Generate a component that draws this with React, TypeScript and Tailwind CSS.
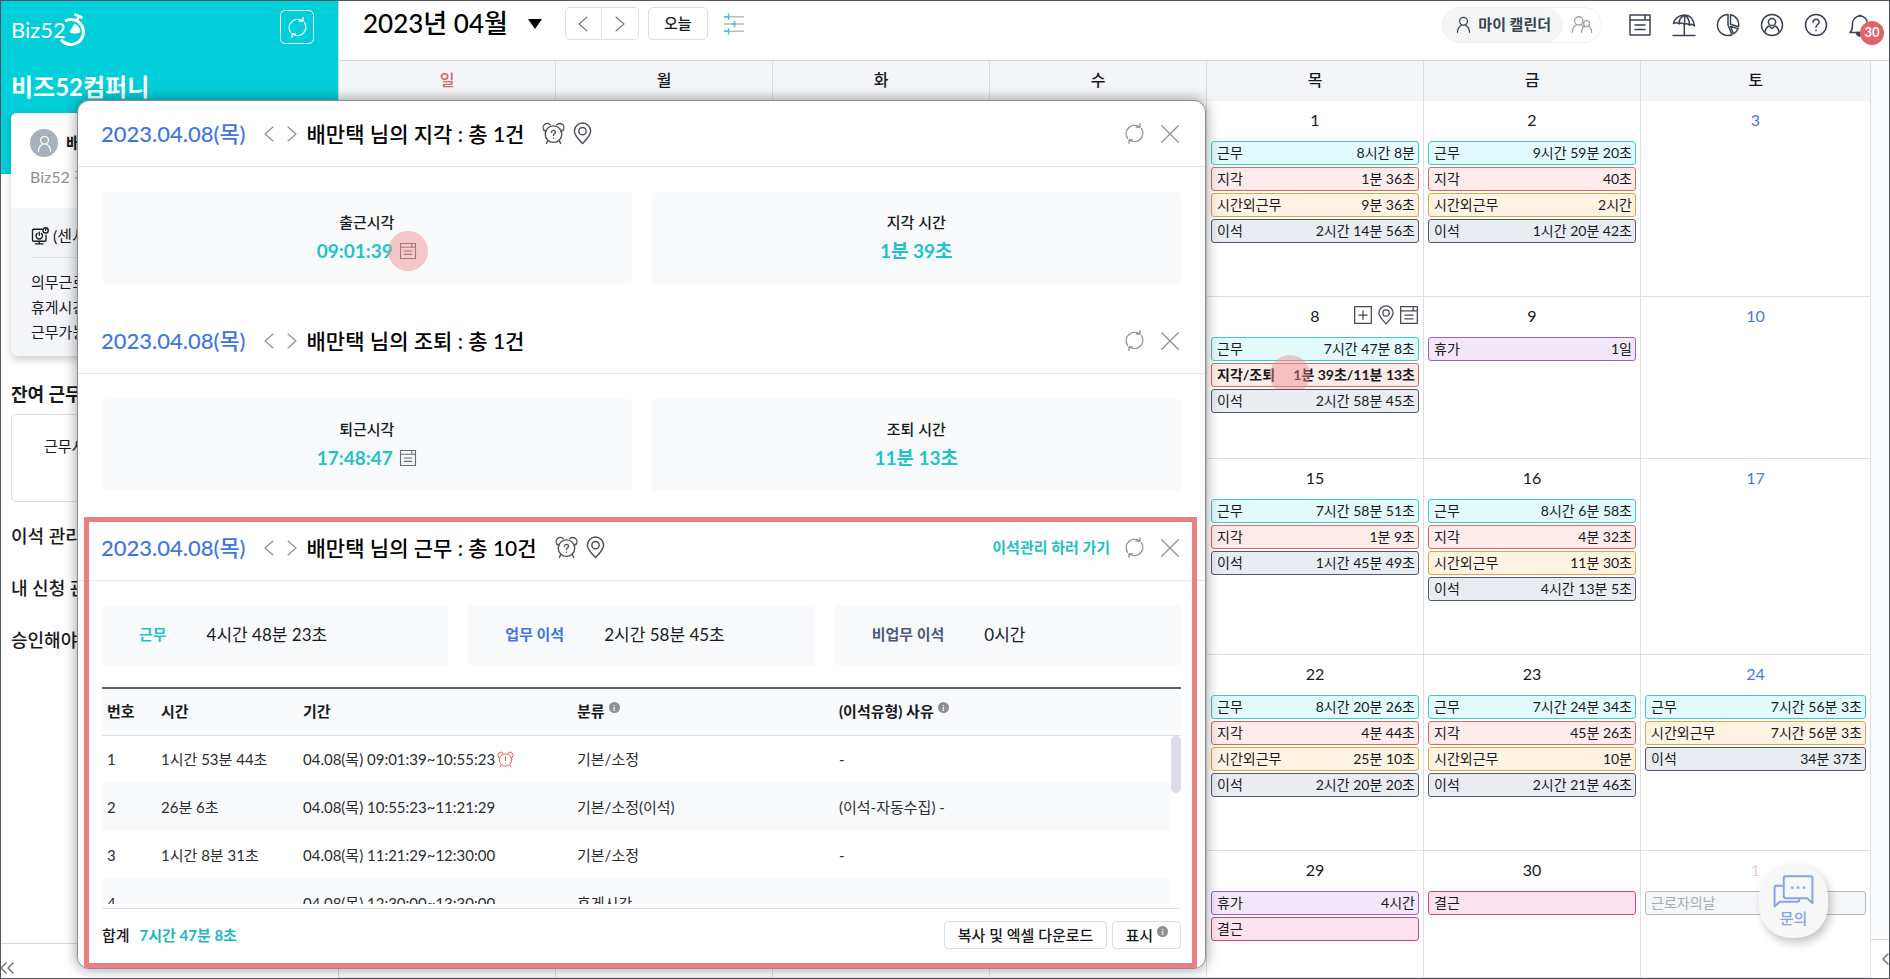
import type { ReactNode } from "react";
import { ChevronsLeft } from "lucide-react";

type IconProps = { className?: string };

function Svg({ className, box = 24, children, width = 1.3 }: IconProps & { box?: number; children: ReactNode; width?: number }) {
  return (
    <svg
      className={className}
      viewBox={`0 0 ${box} ${box}`}
      fill="none"
      stroke="currentColor"
      strokeWidth={width}
      strokeLinecap="round"
      strokeLinejoin="round"
      aria-hidden="true"
    >
      {children}
    </svg>
  );
}

const NoteIcon = ({ className }: IconProps) => (
  <Svg className={className} width={1.5}>
    <path d="M2 2h20v20H2zM2 7h20M17 2v5M7 12h10M7 16.5h10" />
  </Svg>
);

const RefreshIcon = ({ className }: IconProps) => (
  <Svg className={className} width={1.5}>
    <path d="M4 17.500A9.700 9.700 0 0 1 17.500 4.200" />
    <path d="M18.300.800v4h-4.300" />
    <path d="M20 6.500A9.700 9.700 0 0 1 6.500 19.800" />
    <path d="M5.700 23.200v-4h4.300" />
  </Svg>
);

const CloseIcon = ({ className }: IconProps) => (
  <Svg className={className}>
    <path d="M3 3l18 18M21 3L3 21" />
  </Svg>
);

const PrevIcon = ({ className }: IconProps) => (
  <Svg className={className} box={16} width={1.1}>
    <path d="M12 1L4 8l8 7" />
  </Svg>
);

const NextIcon = ({ className }: IconProps) => (
  <Svg className={className} box={16} width={1.1}>
    <path d="M4 1l8 7-8 7" />
  </Svg>
);

const PinIcon = ({ className }: IconProps) => (
  <Svg className={className} width={1.5}>
    <path d="M12 22.500C8 18 3.500 14 3.500 9.600a8.500 8.500 0 0 1 17 0c0 4.400-4.500 8.400-8.500 12.900z" />
    <circle cx="12" cy="9.600" r="3.800" />
  </Svg>
);

function AlarmIcon({ className, mark }: IconProps & { mark: "?" | "!" }) {
  return (
    <Svg className={className} width={1.4}>
      <circle cx="12" cy="12.700" r="8.600" />
      <path d="M2.300 8.800A4.200 4.200 0 0 1 8.700 3M21.700 8.800A4.200 4.200 0 0 0 15.300 3M6 19.400l-1.500 3.100M18 19.400l1.500 3.100" />
      <path d="M2.300 8.800l1.800 1M21.700 8.800l-1.800 1" />
      {mark === "?" ? (
        <path d="M9.800 10.800c.2-2.900 4.600-2.500 4.300.1-.2 1.500-2.100 1.500-2.100 3.200M12 16.800v.2" />
      ) : (
        <path d="M12 8v6M12 16.800v.2" />
      )}
    </Svg>
  );
}

const UserIcon = ({ className }: IconProps) => (
  <Svg className={className} width={1.8}>
    <circle cx="12" cy="7.500" r="5.500" />
    <path d="M3.500 23c0-5 2-8 5.500-10M20.500 23c0-5-2-8-5.500-10" />
  </Svg>
);

const UsersIcon = ({ className }: IconProps) => (
  <Svg className={className} width={1.4}>
    <circle cx="8.500" cy="7.500" r="4.500" />
    <path d="M1.500 20c0-4.500 1.500-6.800 4.500-8.300M11 11.700c1.200.6 2.200 1.500 2.900 2.700" />
    <circle cx="17" cy="10.500" r="3.200" />
    <path d="M11.500 20c0-3.500 1.200-5.500 3.600-6.500M22.500 20c0-3.500-1.200-5.500-3.600-6.500" />
  </Svg>
);

const ParasolIcon = ({ className }: IconProps) => (
  <Svg className={className} width={1.5}>
    <path d="M1.500 10.500C2.500 5.500 7 2 12.500 2c5.500 0 9 4 10 11-1.500-1.800-3.300-2-5-.8-1.500-1.600-3.500-1.800-5-.8-1.800-1.500-4-1.700-5.500-.6-1.700-1.200-4-1.300-5.500-.3zM12.500 2C8.500 4 7 7.500 7 10.700M12.500 2c.3 2.500.3 6 0 9.300M12.500 2c3.500 2 5 5.500 5 10M12.300 11.500V22M1 22.500h22" />
  </Svg>
);

const PieIcon = ({ className }: IconProps) => (
  <Svg className={className} width={1.5}>
    <path d="M12 1.500A10.500 10.500 0 1 0 16 21.700L12 12z" />
    <path d="M14.500 1.700v9.500l8 2.500a10 10 0 0 0-8-12zM14.500 13.500l3 7.300c2.300-1.300 3.800-3 4.600-5.200z" />
  </Svg>
);

const AccountIcon = ({ className }: IconProps) => (
  <Svg className={className} width={1.5}>
    <circle cx="12" cy="12" r="10.500" />
    <circle cx="12" cy="9" r="3.600" />
    <path d="M5 19.500c.3-3.300 1.600-5.300 3.800-6.500l3.200 2.500 3.200-2.500c2.200 1.200 3.500 3.200 3.800 6.500" />
  </Svg>
);

const HelpIcon = ({ className }: IconProps) => (
  <Svg className={className} width={1.5}>
    <circle cx="12" cy="12" r="10.500" />
    <path d="M9 9.300c.2-4.200 6.400-3.800 6.100 0-.2 2.300-3.100 2.300-3.100 5M12 17.300v.4" />
  </Svg>
);

const BellIcon = ({ className }: IconProps) => (
  <Svg className={className} width={1.5}>
    <path d="M2 19.500c2.500-2.500 2.500-4.500 2.500-9a7.500 7.500 0 0 1 15 0c0 4.500 0 6.500 2.500 9z" />
    <path d="M8.500 19.500a3.500 3.500 0 0 0 7 0z" fill="currentColor" />
    <path d="M11 2.500h2" />
  </Svg>
);

const PlusBoxIcon = ({ className }: IconProps) => (
  <Svg className={className} width={1.5}>
    <path d="M2 2h20v20H2zM12 7v10M7 12h10" />
  </Svg>
);

const FilterIcon = ({ className }: IconProps) => (
  <svg className={className} viewBox="0 0 24 24" fill="none" strokeWidth="1.600" aria-hidden="true">
    <path d="M1 4h22M1 12h22M1 20h22" stroke="#b9bcc2" />
    <path d="M1 4h6M10 12h4M1 20h6M6 .5v7M12.500 8.500v7M6 16.500v7" stroke="#35c9d0" />
  </svg>
);

const PowerMonitorIcon = ({ className }: IconProps) => (
  <Svg className={className} width={1.8}>
    <path d="M15 3H3.500A1.500 1.500 0 0 0 2 4.500v13A1.500 1.500 0 0 0 3.500 19h15a1.500 1.500 0 0 0 1.500-1.500V11M11 19v3.500M6 22.500h10M11 7v4M8.200 8.500a4.300 4.300 0 1 0 5.600 0" />
    <circle cx="19.500" cy="4.500" r="3.500" />
    <path d="M19.500 3v1.500" />
  </Svg>
);

const ChatIcon = ({ className }: IconProps) => (
  <svg className={className} viewBox="0 0 42 34" fill="none" stroke="currentColor" strokeWidth="2" strokeLinejoin="round" aria-hidden="true">
    <path d="M10.500 11H3.500A2 2 0 0 0 1.500 13v19.500l5.500-5h18a2 2 0 0 0 2-2V24" />
    <path d="M13 1.200h25.500a2 2 0 0 1 2 2v25.800l-5.500-5H13a2 2 0 0 1-2-2V3.200a2 2 0 0 1 2-2z" />
    <path d="M18.500 13H21M24.500 13H27M30.500 13H33" strokeWidth="2.500" />
  </svg>
);

const Logo = () => (
  <a href="#" className="flex items-center text-white" aria-label="Biz52">
    <span className="text-[22px] leading-9">Biz52</span>
    <svg className="-ml-2 h-10 w-7 overflow-visible" viewBox="0 0 28 40" fill="none" stroke="#fff" aria-hidden="true">
      <path d="M7 11A12.500 12.500 0 1 1 3 29.500" strokeWidth="3" />
      <path d="M16.500 4.200l8 3.600M21 6l-2 4" strokeWidth="2.600" />
      <path d="M11.500 22l5-8.500c3.500 1.500 5.500 4.500 6 8.500-3.500 2-8 2-11 0z" fill="#fff" stroke="none" />
    </svg>
  </a>
);

const InfoDot = () => (
  <span className="ml-1 inline-flex size-[11px] -translate-y-1.5 items-center justify-center rounded-full bg-[#8d8f93] text-[8px] leading-none font-bold text-white">
    i
  </span>
);

type EventKind = "work" | "late" | "over" | "away" | "leave" | "absent" | "holiday";
type CalendarEvent = { kind: EventKind; label: string; value?: string; strong?: boolean };
type Day = { date: string; tone?: "sat" | "off"; tools?: boolean; events?: CalendarEvent[] };

const eventStyle: Record<EventKind, string> = {
  work: "border-[#3fcbcb] bg-[#e2fafb]",
  late: "border-[#d66a62] bg-[#fdecea]",
  over: "border-[#e3a54a] bg-[#fff4e3]",
  away: "border-[#505a6c] bg-[#e9edf2]",
  leave: "border-[#9a62c4] bg-[#f3e8fa]",
  absent: "border-[#d2457c] bg-[#fde3ee]",
  holiday: "border-[#b4bac2] bg-[#f4f6f8] text-[#a7acb3]",
};

const work = (value: string): CalendarEvent => ({ kind: "work", label: "근무", value });
const late = (value: string): CalendarEvent => ({ kind: "late", label: "지각", value });
const over = (value: string): CalendarEvent => ({ kind: "over", label: "시간외근무", value });
const away = (value: string): CalendarEvent => ({ kind: "away", label: "이석", value });

const empty: Day[] = [{ date: "" }, { date: "" }, { date: "" }, { date: "" }];

const weeks: { height: string; days: Day[] }[] = [
  {
    height: "min-h-[196px]",
    days: [
      ...empty,
      { date: "1", events: [work("8시간 8분"), late("1분 36초"), over("9분 36초"), away("2시간 14분 56초")] },
      { date: "2", events: [work("9시간 59분 20초"), late("40초"), over("2시간"), away("1시간 20분 42초")] },
      { date: "3", tone: "sat" },
    ],
  },
  {
    height: "min-h-[162px]",
    days: [
      ...empty,
      {
        date: "8",
        tools: true,
        events: [
          work("7시간 47분 8초"),
          { kind: "late", label: "지각/조퇴", value: "1분 39초/11분 13초", strong: true },
          away("2시간 58분 45초"),
        ],
      },
      { date: "9", events: [{ kind: "leave", label: "휴가", value: "1일" }] },
      { date: "10", tone: "sat" },
    ],
  },
  {
    height: "min-h-[196px]",
    days: [
      ...empty,
      { date: "15", events: [work("7시간 58분 51초"), late("1분 9초"), away("1시간 45분 49초")] },
      { date: "16", events: [work("8시간 6분 58초"), late("4분 32초"), over("11분 30초"), away("4시간 13분 5초")] },
      { date: "17", tone: "sat" },
    ],
  },
  {
    height: "min-h-[196px]",
    days: [
      ...empty,
      { date: "22", events: [work("8시간 20분 26초"), late("4분 44초"), over("25분 10초"), away("2시간 20분 20초")] },
      { date: "23", events: [work("7시간 24분 34초"), late("45분 26초"), over("10분"), away("2시간 21분 46초")] },
      { date: "24", tone: "sat", events: [work("7시간 56분 3초"), over("7시간 56분 3초"), away("34분 37초")] },
    ],
  },
  {
    height: "min-h-[127px]",
    days: [
      ...empty,
      { date: "29", events: [{ kind: "leave", label: "휴가", value: "4시간" }, { kind: "absent", label: "결근" }] },
      { date: "30", events: [{ kind: "absent", label: "결근" }] },
      { date: "1", tone: "off", events: [{ kind: "holiday", label: "근로자의날" }] },
    ],
  },
];

const columns = "grid grid-cols-[repeat(6,minmax(0,217fr))_minmax(0,230fr)]";

function EventBar({ event }: { event: CalendarEvent }) {
  return (
    <button
      type="button"
      className={`relative flex h-6 w-full items-center justify-between rounded-[3px] border pr-[3px] pl-[5px] text-sm leading-5 whitespace-nowrap ${eventStyle[event.kind]} ${event.strong ? "font-bold" : ""}`}
    >
      <span>{event.label}</span>
      <span>{event.value}</span>
      {event.strong && <span className="absolute left-[58px] size-10 rounded-full bg-[#f08a8e]/45" />}
    </button>
  );
}

function DayCell({ day }: { day: Day }) {
  const tone = day.tone === "sat" ? "text-[#4a76e0]" : day.tone === "off" ? "text-[#f3c9d0]" : "";
  return (
    <div className="relative border-r border-b border-[#dddfe2] px-1">
      <div className={`h-10 text-center text-base leading-[38px] ${tone}`}>{day.date}</div>
      {day.tools && (
        <div className="absolute top-2 right-1 flex items-center gap-[3px] text-[#44484f]">
          <PlusBoxIcon className="size-5" />
          <PinIcon className="size-5" />
          <NoteIcon className="size-5" />
        </div>
      )}
      <div className="flex flex-col gap-0.5">
        {day.events?.map((event) => (
          <EventBar key={event.label} event={event} />
        ))}
      </div>
    </div>
  );
}

function TopBar() {
  return (
    <header className="flex h-[60px] items-start justify-between border-b border-[#d4d7db] pr-2 pl-6">
      <div className="flex h-[45px] items-center">
        <h1 className="text-[26px] font-medium text-black">2023년 04월</h1>
        <button type="button" aria-label="월 선택" className="ml-5">
          <svg className="h-[10px] w-[14px]" viewBox="0 0 14 10" aria-hidden="true">
            <path d="M0 0h14L7 10z" fill="#000" />
          </svg>
        </button>
        <div className="ml-[23px] flex h-[33px] divide-x divide-[#dcdee1] rounded-[5px] border border-[#dcdee1] text-[#777]">
          <button type="button" aria-label="이전 달" className="flex w-9 items-center justify-center">
            <PrevIcon className="size-4" />
          </button>
          <button type="button" aria-label="다음 달" className="flex w-9 items-center justify-center">
            <NextIcon className="size-4" />
          </button>
        </div>
        <button type="button" className="ml-[9px] h-[33px] rounded-[5px] border border-[#dcdee1] px-[15px] text-[15px] font-medium">
          오늘
        </button>
        <button type="button" aria-label="필터" className="ml-[15px]">
          <FilterIcon className="size-[22px]" />
        </button>
      </div>
      <div className="flex h-[47px] items-center text-[#3a4354]">
        <div className="mr-[26px] flex h-9 rounded-full border border-[#eceef0]">
          <button type="button" className="flex items-center gap-1.5 rounded-full bg-[#f3f5f7] px-3 text-[15px] font-bold whitespace-nowrap">
            <UserIcon className="size-[17px]" />
            마이 캘린더
          </button>
          <button type="button" aria-label="조직 캘린더" className="flex w-[38px] items-center justify-center text-[#9da1a8]">
            <UsersIcon className="size-[22px]" />
          </button>
        </div>
        <nav className="flex items-center gap-5">
          <a href="#" aria-label="일지"><NoteIcon className="size-6" /></a>
          <a href="#" aria-label="휴가"><ParasolIcon className="size-6" /></a>
          <a href="#" aria-label="통계"><PieIcon className="size-6" /></a>
          <a href="#" aria-label="내 정보"><AccountIcon className="size-6" /></a>
          <a href="#" aria-label="도움말"><HelpIcon className="size-6" /></a>
          <a href="#" aria-label="알림" className="relative mr-[9px]">
            <BellIcon className="size-6" />
            <span className="absolute top-2 left-3 flex size-6 items-center justify-center rounded-full bg-[#e2646a] text-[13px] font-bold text-white">
              30
            </span>
          </a>
        </nav>
      </div>
    </header>
  );
}

function Sidebar() {
  return (
    <aside className="flex w-[337px] shrink-0 flex-col bg-white">
      <div className="-mb-[61px] h-[173px] shrink-0 bg-[#00ced8]">
        <div className="flex items-start justify-between pt-[9px] pr-6 pl-2.5">
          <Logo />
          <button type="button" aria-label="새로고침" className="flex size-[34px] items-center justify-center rounded-[5px] border border-white text-white">
            <RefreshIcon className="size-[21px]" />
          </button>
        </div>
        <div className="mt-[19px] pl-2.5 text-[24px] leading-9 font-bold text-white">비즈52컴퍼니</div>
      </div>
      <section className="mr-6 ml-2.5 h-[243px] overflow-hidden rounded-md bg-[#f3f5f8] text-[15px] shadow-[0_4px_8px_rgba(0,0,0,0.18)]">
        <div className="h-[95px] bg-white pt-4 pl-[19px]">
          <div className="flex items-center gap-2">
            <span className="flex size-7 items-center justify-center rounded-full bg-[#a6b1bd] text-white">
              <UserIcon className="size-[17px]" />
            </span>
            <span className="text-base font-bold">배만택</span>
          </div>
          <div className="mt-2 text-base leading-6 text-[#8e9196]">Biz52 경영지원팀</div>
        </div>
        <div className="pl-5">
          <div className="flex h-[50px] items-center gap-1 border-b border-[#dfe2e6] pt-1.5 text-base">
            <PowerMonitorIcon className="size-[18px]" />
            (센서 켜짐)
          </div>
          <ul className="pt-3 leading-[25px]">
            <li>의무근로시간</li>
            <li>휴게시간</li>
            <li>근무가능시간</li>
          </ul>
        </div>
      </section>
      <div className="mt-6 flex flex-1 flex-col pl-2.5 text-[18px] font-medium">
        <h2 className="leading-7 font-bold">잔여 근무시간</h2>
        <div className="mt-1.5 mr-6 h-[88px] rounded-[5px] border border-[#dcdee1] pt-5 pl-8 text-[15px] font-normal">근무시간</div>
        <div className="mt-5 flex flex-col gap-6 leading-7">
          <a href="#">이석 관리</a>
          <a href="#">내 신청 관리</a>
          <a href="#">승인해야 할 신청</a>
        </div>
      </div>
      <div className="h-[35px] border-t border-[#d6d8dc] pt-3 text-[#6f7478]">
        <ChevronsLeft className="size-6 -translate-x-1.5" strokeWidth={1.5} />
      </div>
    </aside>
  );
}

function SectionHeader({ title, extras, link }: { title: string; extras?: boolean; link?: boolean }) {
  return (
    <header className="flex h-[66px] items-center border-b border-[#e4e6e8] pr-6 pl-[23px]">
      <span className="text-[22px] font-medium text-[#3f76e0]">2023.04.08(목)</span>
      <button type="button" aria-label="이전 날짜" className="ml-[15px] text-[#8b8e93]">
        <PrevIcon className="size-4" />
      </button>
      <button type="button" aria-label="다음 날짜" className="mx-[7px] text-[#8b8e93]">
        <NextIcon className="size-4" />
      </button>
      <h2 className="text-[21px] font-medium text-black">{title}</h2>
      {extras && (
        <div className="ml-[18px] flex gap-1.5 text-[#4c5057]">
          <AlarmIcon className="size-[23px]" mark="?" />
          <PinIcon className="size-[23px]" />
        </div>
      )}
      <div className="ml-auto flex items-center gap-[14px] text-[#8b8e93]">
        {link && <a href="#" className="text-[15px] font-bold text-[#1cc3c9]">이석관리 하러 가기</a>}
        <button type="button" aria-label="새로고침"><RefreshIcon className="size-[21px]" /></button>
        <button type="button" aria-label="닫기"><CloseIcon className="size-[22px]" /></button>
      </div>
    </header>
  );
}

function StatBox({ label, value, note, marked }: { label: string; value: string; note?: boolean; marked?: boolean }) {
  return (
    <div className="flex h-[92px] flex-1 flex-col items-center rounded bg-[#f9fafb] pt-[18px]">
      <div className="text-[15px] leading-6 font-medium">{label}</div>
      <div className="mt-[3px] flex items-center gap-1.5 text-[19px] leading-7 font-bold text-[#1cc3c9]">
        {value}
        {note && (
          <span className="relative flex">
            <NoteIcon className="size-[18px] text-[#666a70]" />
            {marked && <span className="absolute -top-[11px] -left-[11px] size-10 rounded-full bg-[#f08a8e]/45" />}
          </span>
        )}
      </div>
    </div>
  );
}

function SummaryBox({ label, value, tone }: { label: string; value: string; tone: string }) {
  return (
    <div className="flex h-[61px] flex-1 items-center gap-10 rounded bg-[#f9fafc] pb-0.5 pl-[37px]">
      <span className={`text-[15px] font-bold ${tone}`}>{label}</span>
      <span className="text-[17px]">{value}</span>
    </div>
  );
}

const records = [
  { no: 1, time: "1시간 53분 44초", span: "04.08(목) 09:01:39~10:55:23", type: "기본/소정", reason: "-", alarm: true },
  { no: 2, time: "26분 6초", span: "04.08(목) 10:55:23~11:21:29", type: "기본/소정(이석)", reason: "(이석-자동수집) -" },
  { no: 3, time: "1시간 8분 31초", span: "04.08(목) 11:21:29~12:30:00", type: "기본/소정", reason: "-" },
  { no: 4, time: "-", span: "04.08(목) 12:30:00~13:30:00", type: "휴게시간", reason: "-" },
];

function RecordTable() {
  return (
    <div className="relative mx-6 mt-[21px] h-[217px] overflow-hidden border-t-2 border-[#5c6270]">
      <table className="w-full table-fixed text-left text-[15px]">
        <colgroup>
          <col className="w-[54px]" />
          <col className="w-[142px]" />
          <col className="w-[274px]" />
          <col className="w-[262px]" />
          <col />
          <col className="w-[10px]" />
        </colgroup>
        <thead>
          <tr className="h-[46px] border-b border-[#dfe1e4] bg-[#f9fafc]">
            <th className="pb-0.5 pl-[5px]">번호</th>
            <th className="pb-0.5 pl-[5px]">시간</th>
            <th className="pb-0.5 pl-[5px]">기간</th>
            <th className="pb-0.5 pl-[5px]">분류<InfoDot /></th>
            <th className="pb-0.5 pl-[5px]" colSpan={2}>(이석유형) 사유<InfoDot /></th>
          </tr>
        </thead>
        <tbody className="text-[#2a2d32]">
          {records.map((r) => (
            <tr key={r.no} className="h-12 [&:nth-child(even)>td:not(:last-child)]:bg-[#f9fafc]">
              <td className="pl-[5px]">{r.no}</td>
              <td className="pl-[5px]">{r.time}</td>
              <td className="pl-[5px]">
                <span className="flex items-center gap-0.5">
                  {r.span}
                  {r.alarm && <AlarmIcon className="size-[17px] text-[#ea6159]" mark="!" />}
                </span>
              </td>
              <td className="pl-[5px]">{r.type}</td>
              <td className="pl-[5px]">{r.reason}</td>
              <td />
            </tr>
          ))}
        </tbody>
      </table>
      <span className="absolute top-[47px] right-0 h-[57px] w-[10px] rounded-full bg-[#dcdde9]" />
    </div>
  );
}

function DetailDialog() {
  return (
    <div
      role="dialog"
      aria-label="근태 상세"
      className="absolute top-[99px] right-[683px] left-[76px] rounded-xl border border-[#8c8f92] bg-white pb-[19px] shadow-[0_0_14px_rgba(0,0,0,0.4)]"
    >
      <section>
        <SectionHeader title="배만택 님의 지각 : 총 1건" extras />
        <div className="flex gap-5 px-6 pt-[25px] pb-6">
          <StatBox label="출근시각" value="09:01:39" note marked />
          <StatBox label="지각 시간" value="1분 39초" />
        </div>
      </section>
      <section>
        <SectionHeader title="배만택 님의 조퇴 : 총 1건" />
        <div className="flex gap-5 px-6 pt-[25px] pb-6">
          <StatBox label="퇴근시각" value="17:48:47" note />
          <StatBox label="조퇴 시간" value="11분 13초" />
        </div>
      </section>
      <section>
        <SectionHeader title="배만택 님의 근무 : 총 10건" extras link />
        <div className="flex gap-5 px-6 pt-6">
          <SummaryBox label="근무" value="4시간 48분 23초" tone="text-[#1cc3c9]" />
          <SummaryBox label="업무 이석" value="2시간 58분 45초" tone="text-[#3f76e0]" />
          <SummaryBox label="비업무 이석" value="0시간" tone="text-[#4b5a7c]" />
        </div>
        <RecordTable />
        <footer className="mx-6 mt-1 flex items-center border-t border-[#dfe1e4] pt-3">
          <span className="text-[15px] font-medium">합계</span>
          <span className="ml-2.5 text-[15px] font-bold text-[#1cb8be]">7시간 47분 8초</span>
          <button type="button" className="ml-auto h-7 rounded border border-[#dcdee1] px-[13px] text-[15px] font-medium">
            복사 및 엑셀 다운로드
          </button>
          <button type="button" className="ml-[5px] h-7 rounded border border-[#dcdee1] px-3 text-[15px] font-medium">
            표시<InfoDot />
          </button>
        </footer>
      </section>
      <div className="pointer-events-none absolute right-2 bottom-0 left-1.5 h-[451px] border-5 border-[#e97f82]" />
    </div>
  );
}

export default function App() {
  return (
    <div className="relative flex min-h-screen overflow-hidden border border-[#55565a] bg-white font-['Lato','Noto_Sans_CJK_KR',sans-serif] text-[#17191d]">
      <Sidebar />
      <main className="flex min-w-0 flex-1 flex-col border-l border-[#d4d7db]">
        <TopBar />
        <div className="flex flex-1">
          <div className="flex min-w-0 flex-1 flex-col">
            <div className={`${columns} bg-[#f4f5f8]`}>
              {["일", "월", "화", "수", "목", "금", "토"].map((name) => (
                <div
                  key={name}
                  className={`h-10 border-r border-[#d9dbdf] text-center text-base leading-[38px] font-medium ${name === "일" ? "text-[#d9626f]" : ""}`}
                >
                  {name}
                </div>
              ))}
            </div>
            {weeks.map((week, w) => (
              <div key={w} className={`${columns} ${week.height}`}>
                {week.days.map((day, d) => (
                  <DayCell key={d} day={day} />
                ))}
              </div>
            ))}
          </div>
          <div className="flex w-[18px] shrink-0 flex-col justify-end bg-[#fafbfc]">
            <button type="button" aria-label="펼치기" className="flex h-[39px] items-center overflow-hidden border-t border-[#d6d8dc] bg-white pl-1.5 text-[#6f7478]">
              <ChevronsLeft className="size-6 shrink-0" strokeWidth={1.5} />
            </button>
          </div>
        </div>
      </main>
      <DetailDialog />
      <button
        type="button"
        className="absolute right-[61px] bottom-10 flex h-[74px] w-[69px] flex-col items-center justify-center rounded-[32px] bg-[#f7f7f8] text-[#86a3e8] shadow-[3px_5px_8px_rgba(0,0,0,0.22)]"
      >
        <ChatIcon className="h-[33px] w-[41px]" />
        <span className="text-[15px] leading-5 font-medium">문의</span>
      </button>
    </div>
  );
}
